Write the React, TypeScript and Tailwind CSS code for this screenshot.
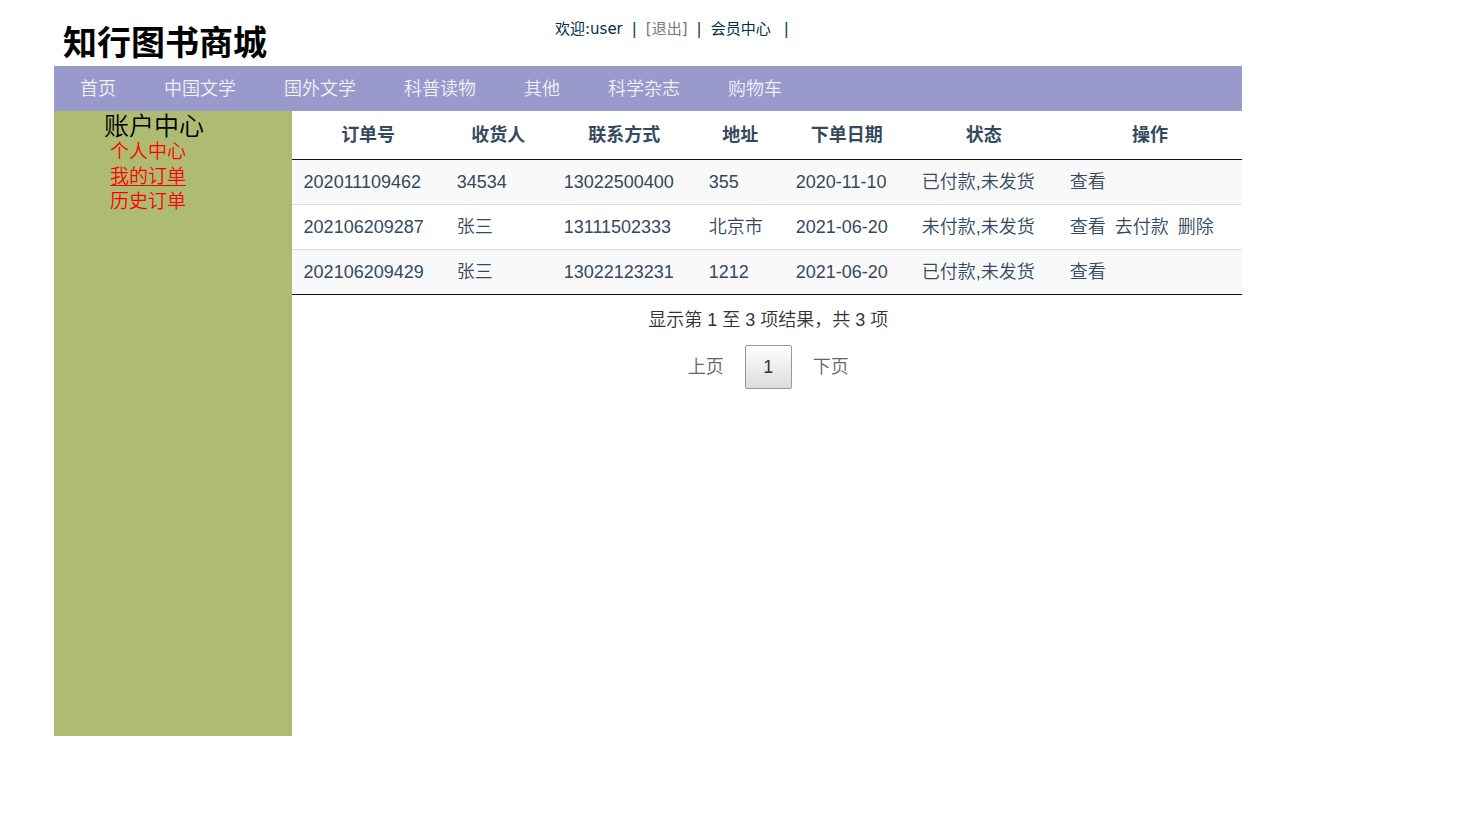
import React, { useState } from 'react';
import clsx from 'clsx';

interface Order {
  id: string;
  receiver: string;
  phone: string;
  address: string;
  date: string;
  status: string;
  actions: string[];
}

const categories = ['首页', '中国文学', '国外文学', '科普读物', '其他', '科学杂志', '购物车'];

const accountLinks = ['个人中心', '我的订单', '历史订单'];

const columns = [
  { title: '订单号', width: 'w-[153px]' },
  { title: '收货人', width: 'w-[107px]' },
  { title: '联系方式', width: 'w-[145px]' },
  { title: '地址', width: 'w-[87px]' },
  { title: '下单日期', width: 'w-[126px]' },
  { title: '状态', width: 'w-[148px]' },
  { title: '操作', width: 'w-[184px]' },
];

const orders: Order[] = [
  {
    id: '202011109462',
    receiver: '34534',
    phone: '13022500400',
    address: '355',
    date: '2020-11-10',
    status: '已付款,未发货',
    actions: ['查看'],
  },
  {
    id: '202106209287',
    receiver: '张三',
    phone: '13111502333',
    address: '北京市',
    date: '2021-06-20',
    status: '未付款,未发货',
    actions: ['查看', '去付款', '删除'],
  },
  {
    id: '202106209429',
    receiver: '张三',
    phone: '13022123231',
    address: '1212',
    date: '2021-06-20',
    status: '已付款,未发货',
    actions: ['查看'],
  },
];

const Header: React.FC = () => (
  <header className="flex h-[66px] items-start">
    <h1 className="w-[501px] pl-[9px] pt-[23px] text-[34px] leading-[40px] font-bold text-black">
      知行图书商城
    </h1>
    <div className="flex gap-[9px] pt-[18px] font-['DejaVu_Sans','Noto_Sans_CJK_SC',sans-serif] text-[15px] leading-[22px] font-normal text-[#003048]">
      <span>欢迎:user</span>
      <span>|</span>
      <a href="#logout" className="text-[#777]">[退出]</a>
      <span>|</span>
      <a href="#member">会员中心</a>
      <span className="pl-1">|</span>
    </div>
  </header>
);

const CategoryNav: React.FC = () => (
  <nav className="flex h-[45px] items-center gap-12 bg-[#9999cc] pl-[26px] text-lg text-[#f0f0f8]">
    {categories.map((name) => (
      <a key={name} href="#category">{name}</a>
    ))}
  </nav>
);

const Sidebar: React.FC = () => {
  const [active, setActive] = useState('我的订单');

  return (
    <aside className="min-h-[625px] w-1/5 bg-[#aebb72] pt-[2px]">
      <h2 className="pl-[50px] text-[25px] leading-[26px] text-black">账户中心</h2>
      <ul className="pl-[56px] text-[19px] leading-[25px] text-[#ff0000]">
        {accountLinks.map((name) => (
          <li key={name}>
            <a
              href="#account"
              onClick={() => setActive(name)}
              className={clsx(active === name && 'underline underline-offset-2')}
            >
              {name}
            </a>
          </li>
        ))}
      </ul>
    </aside>
  );
};

const OrderTable: React.FC = () => (
  <table className="w-full table-fixed border-separate border-spacing-0 border-b border-[#111] text-left text-lg leading-6 text-[#34495e]">
    <thead>
      <tr>
        {columns.map((col) => (
          <th
            key={col.title}
            className={clsx(col.width, 'h-[49px] border-b border-[#111] text-center font-bold')}
          >
            {col.title}
          </th>
        ))}
      </tr>
    </thead>
    <tbody className="[&_td]:h-[45px] [&_td]:whitespace-nowrap [&_td]:pl-3 [&_tr:not(:last-child)_td]:border-b [&_td]:border-[#ddd] [&_tr:last-child_td]:h-11">
      {orders.map((order) => (
        <tr key={order.id} className="odd:bg-[#f9f9f9]">
          <td>{order.id}</td>
          <td>{order.receiver}</td>
          <td>{order.phone}</td>
          <td>{order.address}</td>
          <td>{order.date}</td>
          <td>{order.status}</td>
          <td>
            <div className="flex gap-[9px]">
              {order.actions.map((action) => (
                <a key={action} href="#order">{action}</a>
              ))}
            </div>
          </td>
        </tr>
      ))}
    </tbody>
  </table>
);

const Pagination: React.FC = () => (
  <div className="flex flex-col items-center pl-[3px] text-lg leading-6 text-[#333]">
    <p className="pt-[13px]">显示第 1 至 3 项结果，共 3 项</p>
    <div className="mt-[13px] flex items-center gap-[21px]">
      <button type="button" className="text-[#666]">上页</button>
      <button
        type="button"
        className="h-11 w-[47px] rounded-xs border border-[#979797] bg-linear-to-b from-white to-[#dcdcdc]"
      >
        1
      </button>
      <button type="button" className="text-[#666]">下页</button>
    </div>
  </div>
);

const App: React.FC = () => {
  return (
    <div className="ml-[54px] max-w-[1188px] bg-white font-['Liberation_Sans','Noto_Sans_CJK_SC',sans-serif] font-[350]">
      <Header />
      <CategoryNav />
      <div className="flex">
        <Sidebar />
        <main className="w-4/5">
          <OrderTable />
          <Pagination />
        </main>
      </div>
    </div>
  );
};

export default App;
